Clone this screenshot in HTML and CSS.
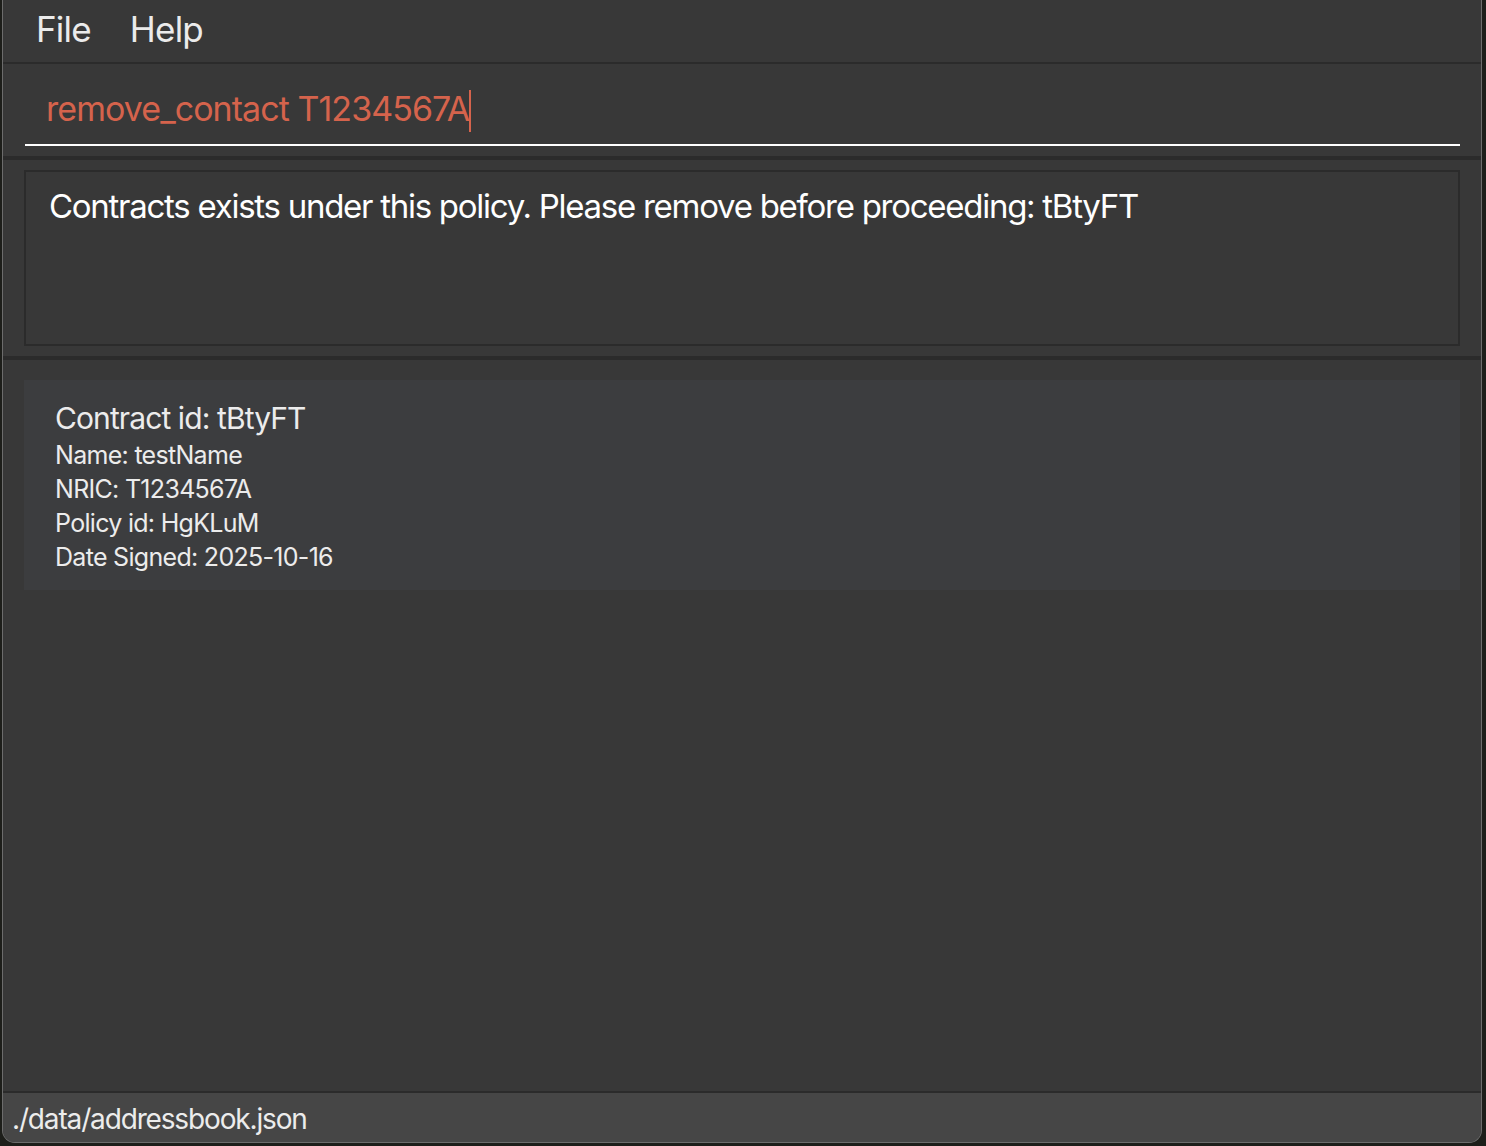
FILE: index.html
```html
<!DOCTYPE html>
<html>
<head>
<meta charset="utf-8">
<link rel="stylesheet" href="styles.css">
</head>
<body>
<div class="window">
  <div class="menubar">
    <span class="menu-item">File</span>
    <span class="menu-item">Help</span>
  </div>
  <div class="command-pane">
    <div class="command-box">
      <span class="command-text">remove_contact T1234567A</span><span class="caret"></span>
    </div>
  </div>
  <div class="result-pane">
    <div class="result-box">Contracts exists under this policy. Please remove before proceeding: tBtyFT</div>
  </div>
  <div class="list-pane">
    <div class="card">
      <div class="card-title">Contract id: tBtyFT</div>
      <div class="card-line">Name: testName</div>
      <div class="card-line">NRIC: T1234567A</div>
      <div class="card-line">Policy id: HgKLuM</div>
      <div class="card-line">Date Signed: 2025-10-16</div>
    </div>
  </div>
  <div class="status-bar">./data/addressbook.json</div>
</div>
</body>
</html>
```

FILE: styles.css
```css
html, body {
  margin: 0;
  padding: 0;
  background: #1d1e1a;
  width: 1486px;
  height: 1146px;
  overflow: hidden;
  font-family: Inter, "Noto Sans", sans-serif;
}

.window {
  box-sizing: border-box;
  margin-left: 2px;
  width: 1480px;
  height: 1143px;
  border: 1px solid #6c6c6c;
  border-top: none;
  border-radius: 0 0 13px 13px;
  background: #383838;
  overflow: hidden;
  display: flex;
  flex-direction: column;
}

.menubar {
  height: 62px;
  flex: none;
  display: flex;
  align-items: center;
  gap: 39px;
  padding-left: 33px;
  border-bottom: 2px solid #2b2b2b;
  color: #ebebeb;
  font-size: 35px;
  letter-spacing: -0.8px;
}

.menu-item {
  line-height: 1;
  margin-top: -4px;
}

.command-pane {
  flex: none;
  height: 96px;
  box-sizing: border-box;
  padding: 0 21px 0 22px;
  border-bottom: 4px solid #2b2b2b;
}

.command-box {
  height: 82px;
  box-sizing: border-box;
  border-bottom: 2px solid #ffffff;
  padding-left: 21px;
  display: flex;
  align-items: flex-end;
  padding-bottom: 18px;
}

.command-text {
  color: #d5634c;
  font-size: 34px;
  letter-spacing: -0.95px;
  line-height: 1;
}

.caret {
  display: inline-block;
  width: 2px;
  height: 42px;
  background: #d5634c;
  margin-left: 0;
  margin-bottom: -6px;
}

.result-pane {
  flex: none;
  box-sizing: border-box;
  height: 200px;
  padding: 10px 21px 0 21px;
  border-bottom: 4px solid #2b2b2b;
}

.result-box {
  box-sizing: border-box;
  height: 176px;
  border: 2px solid #2b2b2b;
  padding: 14px 0 0 23px;
  color: #ffffff;
  font-size: 33px;
  letter-spacing: -1.27px;
  line-height: 40px;
}

.list-pane {
  flex: 1;
  padding: 20px 21px 0 21px;
}

.card {
  height: 210px;
  box-sizing: border-box;
  background: #3c3d3f;
  padding: 18px 0 0 31px;
  color: #ececec;
}

.card-title {
  font-size: 30px;
  letter-spacing: -0.9px;
  line-height: 40px;
}

.card-line {
  font-size: 25px;
  letter-spacing: -0.7px;
  line-height: 34px;
}

.status-bar {
  flex: none;
  height: 51px;
  box-sizing: border-box;
  border-top: 2px solid #2b2b2b;
  background: #464646;
  color: #ececec;
  font-size: 28px;
  letter-spacing: -1.15px;
  padding: 6px 0 0 9px;
  line-height: 40px;
}
```
